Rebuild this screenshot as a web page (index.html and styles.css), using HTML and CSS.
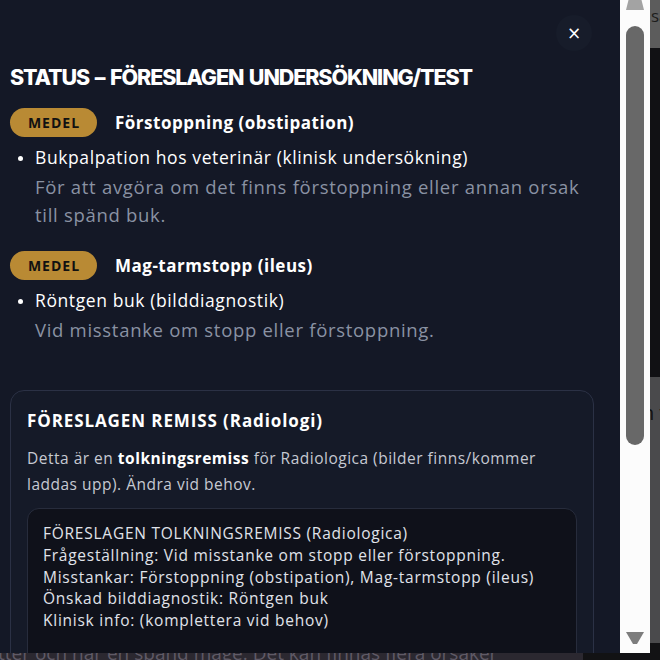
FILE: index.html
```html
<!DOCTYPE html>
<html lang="sv">
<head>
<meta charset="utf-8">
<title>Status</title>
<link rel="stylesheet" href="styles.css">
</head>
<body>
<div class="page">
  <div class="bg-top">sa</div>
  <div class="bg-dark"></div>
  <div class="bg-gray">n v</div>
  <div class="bg-bottom"><div class="bg-bubble">tter och har en spänd mage. Det kan finnas flera orsaker</div></div>
</div>

<div class="modal">
  <div class="panel">
    <button class="close" type="button">×</button>
    <h2 class="heading">STATUS – FÖRESLAGEN UNDERSÖKNING/TEST</h2>

    <section class="item">
      <div class="item-head"><span class="badge">MEDEL</span><span class="item-title">Förstoppning (obstipation)</span></div>
      <ul class="tests">
        <li><span class="test-name">Bukpalpation hos veterinär (klinisk undersökning)</span>
          <p class="test-desc">För att avgöra om det finns förstoppning eller annan orsak till spänd buk.</p></li>
      </ul>
    </section>

    <section class="item">
      <div class="item-head"><span class="badge">MEDEL</span><span class="item-title">Mag-tarmstopp (ileus)</span></div>
      <ul class="tests">
        <li><span class="test-name">Röntgen buk (bilddiagnostik)</span>
          <p class="test-desc">Vid misstanke om stopp eller förstoppning.</p></li>
      </ul>
    </section>

    <div class="card">
      <h3 class="card-title">FÖRESLAGEN REMISS (Radiologi)</h3>
      <p class="card-text">Detta är en <strong>tolkningsremiss</strong> för Radiologica (bilder finns/kommer laddas upp). Ändra vid behov.</p>
      <div class="remiss">FÖRESLAGEN TOLKNINGSREMISS (Radiologica)
Frågeställning: Vid misstanke om stopp eller förstoppning.
Misstankar: Förstoppning (obstipation), Mag-tarmstopp (ileus)
Önskad bilddiagnostik: Röntgen buk
Klinisk info: (komplettera vid behov)


</div>
    </div>
  </div>
  <div class="scrollbar">
    <svg class="arrow-up" width="18" height="10" viewBox="0 0 18 10"><polygon points="3,-2 15,-2 18,10 0,10" fill="#a3a3a3"/></svg>
    <div class="thumb"></div>
    <div class="track-rest"></div>
    <svg class="arrow-down" width="18" height="14" viewBox="0 0 18 14"><polygon points="0,1 18,1 11,13 7,13" fill="#7d7d7d"/></svg>
  </div>
</div>
</body>
</html>
```

FILE: styles.css
```css
* { box-sizing: border-box; }
html, body { margin: 0; padding: 0; }
body {
  background: #111113;
  font-family: "Open Sans", "Noto Sans", sans-serif;
  width: 660px;
  height: 660px;
  overflow: hidden;
  position: relative;
}

/* background page */
.page { width: 660px; }
.bg-top {
  height: 48px;
  background: #5c5c5c;
  color: #1c1c1c;
  font-size: 17px;
  padding: 4px 0 0 651px;
  white-space: nowrap;
  overflow: hidden;
}
.bg-dark { height: 329px; background: #111114; }
.bg-gray {
  height: 276px;
  background: #4a4a4c;
  color: #111;
  font-size: 20px;
  padding: 22px 0 0 642px;
  white-space: nowrap;
  overflow: hidden;
}
.bg-bottom { height: 20px; background: #121214; }
.bg-bubble {
  width: 583px;
  height: 20px;
  background: #2b2830;
  color: #5f5a66;
  font-size: 19px;
  line-height: 20px;
  margin-top: -10px;
  white-space: nowrap;
  overflow: hidden;
  text-indent: -2px;
}

/* modal */
.modal {
  position: absolute;
  top: 0;
  left: 0;
  width: 650px;
  height: 653px;
  display: flex;
}
.panel {
  position: relative;
  width: 620px;
  height: 653px;
  overflow: hidden;
  background: #141826;
  padding: 62px 26px 0 10px;
  color: #fff;
}
.close {
  position: absolute;
  top: 15px;
  left: 556px;
  width: 36px;
  height: 36px;
  border-radius: 50%;
  border: none;
  background: #171c2a;
  color: #fff;
  font-size: 17px;
  line-height: 36px;
  padding: 0;
  font-family: "DejaVu Sans", sans-serif;
}
.heading {
  margin: 0 0 16px;
  font-family: "Inter", sans-serif;
  font-weight: 800;
  font-size: 21.5px;
  line-height: 30px;
  letter-spacing: -1.1px;
  word-spacing: 2px;
  color: #fff;
}
.item { margin-bottom: 22px; }
.item-head {
  display: flex;
  align-items: center;
  gap: 18px;
  height: 29px;
}
.badge {
  display: inline-flex;
  align-items: center;
  justify-content: center;
  width: 87px;
  height: 29px;
  border-radius: 15px;
  background: #b98a34;
  color: #111;
  font-weight: 700;
  font-size: 14px;
  letter-spacing: 1px;
  padding-left: 1px;
}
.item-title {
  font-weight: 700;
  font-size: 17px;
  letter-spacing: 0.5px;
  color: #fff;
}
.tests {
  margin: 6px 0 0;
  padding: 0 0 0 25px;
}
.tests li {
  font-size: 17.5px;
  letter-spacing: 0.6px;
  line-height: 28px;
  color: #fff;
}
.tests li::marker { font-size: 14px; }
.test-name { font-weight: 500; }
.test-desc {
  margin: 2px 0 0;
  color: #8a92a3;
  font-size: 18.5px;
  letter-spacing: 0.7px;
  line-height: 28px;
}

.card {
  margin-top: 46px;
  border: 1px solid #2b3145;
  border-radius: 14px;
  padding: 17px 16px 16px;
  background: #151a28;
  height: 320px;
}
.card-title {
  margin: 0 0 11px;
  font-size: 17px;
  letter-spacing: 0.9px;
  line-height: 26px;
  font-weight: 700;
  color: #fff;
}
.card-text {
  margin: 0 0 11px;
  font-size: 15.5px;
  letter-spacing: 0.5px;
  line-height: 26px;
  color: #c6c9d2;
}
.card-text strong { color: #fff; font-weight: 700; }
.remiss {
  border: 1px solid #272c3c;
  border-radius: 12px;
  background: #0f111a;
  padding: 14px 15px;
  font-size: 15.5px;
  letter-spacing: 0.75px;
  line-height: 21.75px;
  color: #e0e3ea;
  white-space: pre-wrap;
}

.scrollbar {
  width: 30px;
  height: 653px;
  background: #fcfcfc;
  display: flex;
  flex-direction: column;
  align-items: center;
}
.arrow-up { display: block; }
.thumb {
  width: 18px;
  height: 419px;
  margin-top: 16px;
  border-radius: 9px;
  background: #686868;
}
.track-rest { flex: 1; }
.arrow-down { display: block; margin-bottom: 8px; }
```
